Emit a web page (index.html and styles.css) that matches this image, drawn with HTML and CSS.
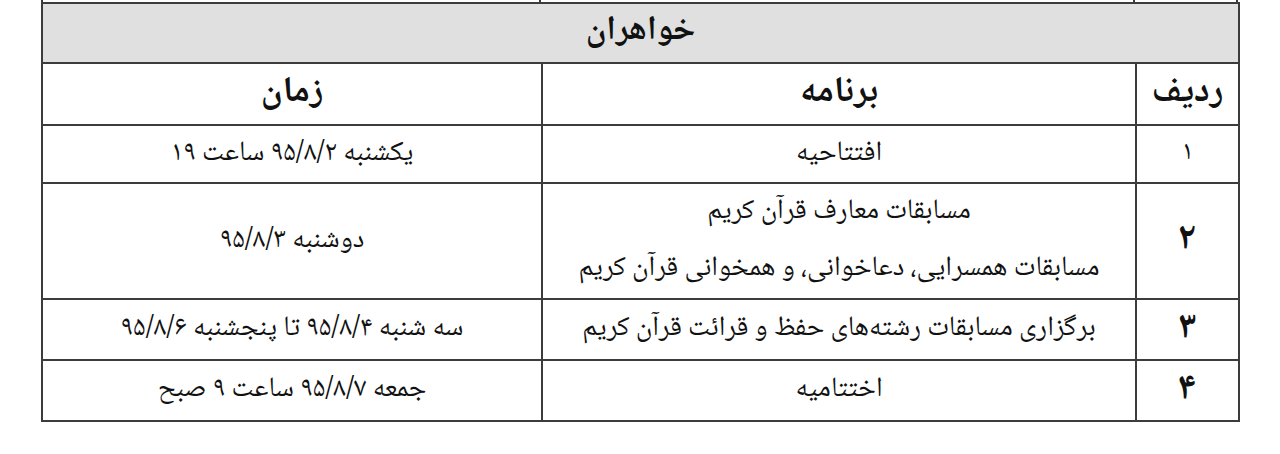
FILE: index.html
```html
<!DOCTYPE html>
<html lang="fa">
<head>
<meta charset="utf-8">
<link rel="stylesheet" href="styles.css">
</head>
<body>
<div class="page">
  <div class="stub" dir="rtl">
    <div class="stub-cell c-num"></div>
    <div class="stub-cell c-prog"></div>
    <div class="stub-cell c-time"></div>
  </div>
  <table class="schedule" dir="rtl">
    <colgroup>
      <col class="col-num">
      <col class="col-prog">
      <col class="col-time">
    </colgroup>
    <tr class="r-title">
      <th colspan="3" class="title">خواهران</th>
    </tr>
    <tr class="r-head">
      <th class="head">ردیف</th>
      <th class="head">برنامه</th>
      <th class="head">زمان</th>
    </tr>
    <tr class="r-1">
      <td class="num thin">۱</td>
      <td>افتتاحیه</td>
      <td>یکشنبه ۹۵/۸/۲ ساعت ۱۹</td>
    </tr>
    <tr class="r-2">
      <td class="num">۲</td>
      <td>
        <div class="line">مسابقات معارف قرآن کریم</div>
        <div class="line">مسابقات همسرایی، دعاخوانی، و همخوانی قرآن کریم</div>
      </td>
      <td>دوشنبه ۹۵/۸/۳</td>
    </tr>
    <tr class="r-3">
      <td class="num">۳</td>
      <td>برگزاری مسابقات رشته‌های حفظ و قرائت قرآن کریم</td>
      <td>سه شنبه ۹۵/۸/۴ تا پنجشنبه ۹۵/۸/۶</td>
    </tr>
    <tr class="r-4">
      <td class="num">۴</td>
      <td>اختتامیه</td>
      <td>جمعه ۹۵/۸/۷ ساعت ۹ صبح</td>
    </tr>
  </table>
</div>
</body>
</html>
```

FILE: styles.css
```css
html, body {
  margin: 0;
  padding: 0;
  background: #ffffff;
}

body {
  font-family: "Noto Naskh Arabic", "Noto Sans Arabic", "DejaVu Sans", sans-serif;
  color: #111111;
}

.page {
  margin: 0 0 0 41px;
  width: 1197px;
}

.stub {
  display: grid;
  grid-template-columns: 103px 594px 500px;
  height: 2px;
}

.stub-cell {
  border-right: 2px solid #3c3c3c;
}

.stub-cell.c-time {
  border-left: 2px solid #3c3c3c;
}

.schedule {
  border-collapse: collapse;
  table-layout: fixed;
  width: 1197px;
}

.col-num { width: 103px; }
.col-prog { width: 594px; }
.col-time { width: 500px; }

.schedule th,
.schedule td {
  border: 2px solid #3c3c3c;
  text-align: center;
  vertical-align: middle;
  padding: 0 4px;
  white-space: nowrap;
  line-height: 1.1;
}

.schedule td {
  font-size: 28px;
  font-weight: normal;
}

.r-title { height: 60px; }
.r-head { height: 62px; }
.r-1 { height: 58px; }
.r-2 { height: 115px; }
.r-3 { height: 61px; }
.r-4 { height: 61px; }

.title {
  background: #e0e0e0;
  font-size: 34px;
  font-weight: bold;
}

.head {
  font-size: 36px;
  font-weight: bold;
}

.schedule td.num {
  font-size: 38px;
  font-weight: bold;
}

.schedule td.num.thin {
  font-size: 27px;
  font-weight: normal;
}

.line {
  line-height: 57px;
}
```
